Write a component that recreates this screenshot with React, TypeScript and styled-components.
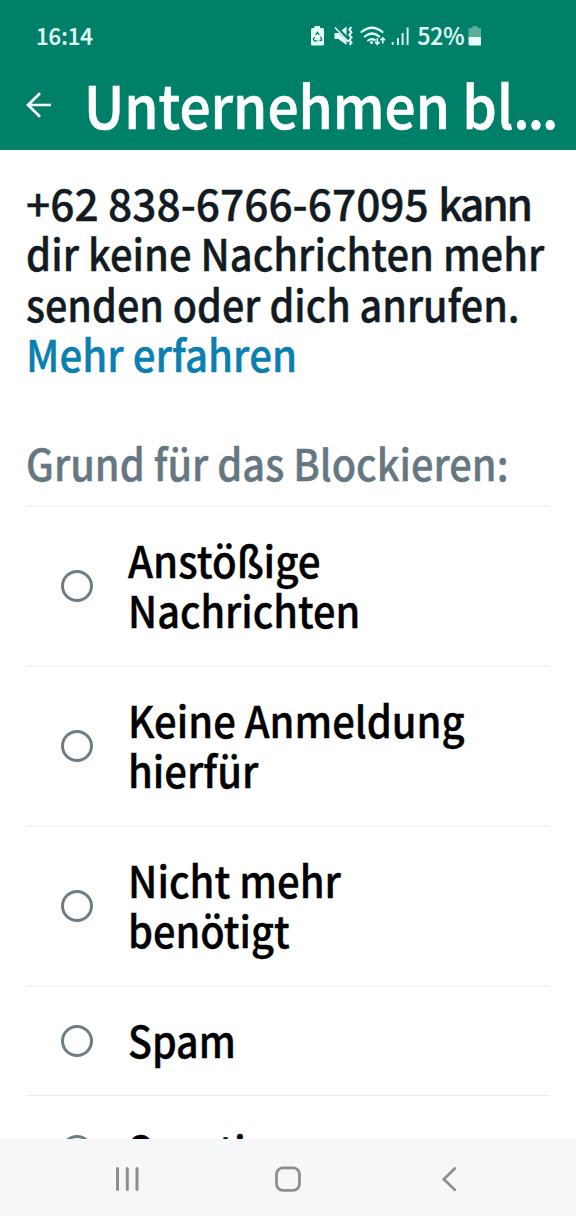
import React from "react";
import styled, { createGlobalStyle } from "styled-components";

const GlobalStyle = createGlobalStyle`
  body { margin: 0; background: #fff; }
`;

const Screen = styled.div`
  display: flex;
  flex-direction: column;
  width: 576px;
  height: 1216px;
  overflow: hidden;
  background: #fff;
  font-family: "Noto Sans CJK SC", "Noto Sans", sans-serif;
  font-weight: 500;
  -webkit-text-stroke: 0.4px currentColor;
`;

const Header = styled.header`
  flex: none;
  height: 149.5px;
  background: #018069;
  color: #fff;
`;

const StatusBar = styled.div`
  display: flex;
  align-items: center;
  height: 72px;
  padding-left: 36px;
  color: #e4fff8;
  font-size: 24px;
  line-height: 34px;
  -webkit-text-stroke: 0.2px currentColor;
`;

const StatusIcons = styled.svg`
  flex: none;
  width: 106px;
  height: 24px;
  margin-left: 214px;
`;

const BatteryIcon = styled.svg`
  flex: none;
  width: 14px;
  height: 20px;
`;

const StatusText = styled.span<{ $width: number; $scale: number }>`
  width: ${(p) => p.$width}px;
  margin-bottom: 3px;
  white-space: nowrap;
  transform: scaleX(${(p) => p.$scale});
  transform-origin: left;
`;

const AppBar = styled.div`
  display: flex;
  align-items: center;
  height: 70px;
  padding-left: 24px;
`;

const BackIcon = styled.svg`
  flex: none;
  width: 30px;
  height: 30px;
  margin-top: -4px;
`;

const Title = styled.h1`
  margin: -6px 0 0 29.5px;
  font-size: 59px;
  line-height: 70px;
  font-weight: 500;
  white-space: nowrap;
  transform: scaleX(0.932);
  transform-origin: left;
  -webkit-text-stroke: 0.7px currentColor;
`;

const Ellipsis = styled.span`
  letter-spacing: -2.2px;
`;

const Content = styled.main`
  flex: 1;
  min-height: 0;
  overflow: hidden;
  padding: 27.5px 26px 0;
  font-size: 43px;
  line-height: 50.3px;
`;

const Line = styled.span<{ $scale: number }>`
  display: block;
  width: max-content;
  white-space: nowrap;
  transform: scaleX(${(p) => p.$scale});
  transform-origin: left;
`;

const Narrow = styled.span`
  letter-spacing: -2.2px;
`;

const Notice = styled.p`
  margin: 0;
  color: #121b22;
`;

const LearnMore = styled(Line)`
  color: #0a7fb0;
`;

const SectionTitle = styled.h2`
  margin: 58.5px 0 0;
  padding-bottom: 18px;
  color: #667781;
  font-size: inherit;
  font-weight: 500;
`;

const Option = styled.div<{ $height: number; $last?: boolean }>`
  display: flex;
  align-items: center;
  box-sizing: border-box;
  height: ${(p) => p.$height}px;
  padding-left: 34.5px;
  border-top: ${(p) => (p.$last ? "1px solid #e9ebec" : "2px solid #f5f6f6")};
  color: #000;
`;

const Labels = styled.div`
  margin-bottom: 3.5px;
`;

const Radio = styled.span`
  flex: none;
  box-sizing: border-box;
  width: 32.5px;
  height: 32.5px;
  margin-right: 35px;
  border: 3px solid #6c7d86;
  border-radius: 50%;
`;

const NavBar = styled.nav`
  flex: none;
  display: flex;
  height: 77px;
  background: #f6f7f9;
`;

const NavIcon = styled.svg`
  width: 576px;
  height: 77px;
`;

type Text = [string, number];

const notice: Text[] = [
  ["dir keine Nachrichten mehr", 0.928],
  ["senden oder dich anrufen.", 0.919],
];

const options: { height: number; lines: Text[] }[] = [
  { height: 160, lines: [["Anstößige", 0.937], ["Nachrichten", 0.923]] },
  { height: 160, lines: [["Keine Anmeldung", 0.929], ["hierfür", 0.93]] },
  { height: 160, lines: [["Nicht mehr", 0.931], ["benötigt", 0.924]] },
  { height: 110, lines: [["Spam", 0.915]] },
  { height: 111, lines: [["Sonstiges", 0.915]] },
];

export default function App() {
  return (
    <Screen>
      <GlobalStyle />
      <Header>
        <StatusBar>
          <StatusText $width={60} $scale={0.92}>16:14</StatusText>
          <StatusIcons viewBox="310 24 106 24" fill="none" stroke="#e4fff8">
            <path d="M314.500 26h5.500v2h2.500q1.500 0 1.500 1.500V44q0 1.500-1.500 1.500h-10q-1.500 0-1.500-1.500V29.500q0-1.500 1.500-1.500h2z" fill="#e4fff8" stroke="none" />
            <path d="M315.700 35l1.800-2.600 1.800 2.600M320.500 36.800l1.300 3-2.300 1M317.500 40.800h-3.200l-1-1.500 1.300-2.300" stroke="#018069" strokeWidth="1.300" />
            <path d="M334.500 33h4l8-6.500v18.500l-8-6h-4z" fill="#e4fff8" stroke="none" />
            <path d="M335.500 26.500l14 15" stroke="#018069" strokeWidth="3.800" />
            <path d="M335 27.500l13.500 14.500" strokeWidth="1.600" />
            <path d="M351.500 27l-2.200 2.500 2.200 2.700-2.200 2.700 2.200 2.700-2.200 2.600 2.200 2.600-2 2" strokeWidth="2" />
            <path d="M361.500 32q10.500-8.500 21 0M364.800 36.500q7.200-6 14.400 0M368.200 40.500q3.300-2.600 6.500-.5" strokeWidth="2.200" strokeLinecap="round" />
            <circle cx="371.500" cy="42.500" r="1.500" fill="#e4fff8" stroke="none" />
            <path d="M377.300 38v6.500M375 42l2.300 2.400 2.300-2.400M382.800 43.500V38M380.500 40.200l2.300-2.400 2.300 2.400" strokeWidth="1.600" />
            <path d="M392.700 42v3M397.900 38v7M402.600 33v12M407.600 27.500v17.500" strokeWidth="1.900" />
          </StatusIcons>
          <StatusText $width={50.5} $scale={0.945}>&#8202;52%</StatusText>
          <BatteryIcon viewBox="-1.500 0 14 20">
            <path d="M4 0h5v2h2.500q1.500 0 1.500 1.500V11H0V3.500Q0 2 1.500 2H4z" fill="#5aae9c" />
            <path d="M0 11h13v7q0 1.500-1.500 1.500h-10Q0 19.500 0 18z" fill="#e4fff8" />
          </BatteryIcon>
        </StatusBar>
        <AppBar>
          <BackIcon viewBox="0 0 30 30" fill="none" stroke="#fff" strokeWidth="2.700">
            <path d="M27 15H4M16 3.200L4 15l12 11.800" />
          </BackIcon>
          <Title>Unternehmen bl<Ellipsis>...</Ellipsis></Title>
        </AppBar>
      </Header>
      <Content>
        <Notice>
          <Line $scale={0.987}>+62 838-6766-67095 <Narrow>kann</Narrow></Line>
          {notice.map(([text, scale]) => (
            <Line key={text} $scale={scale}>{text}</Line>
          ))}
          <LearnMore $scale={0.936}>Mehr erfahren</LearnMore>
        </Notice>
        <SectionTitle>
          <Line $scale={0.925}>Grund für das Blockieren:</Line>
        </SectionTitle>
        {options.map(({ height, lines }, index) => (
          <Option key={lines[0][0]} $height={height} $last={index === options.length - 1}>
            <Radio />
            <Labels>
              {lines.map(([text, scale]) => (
                <Line key={text} $scale={scale}>{text}</Line>
              ))}
            </Labels>
          </Option>
        ))}
      </Content>
      <NavBar>
        <NavIcon viewBox="0 1139 576 77" fill="none" stroke="#8e8e8f" strokeLinecap="round">
          <path d="M117.500 1168.500v21M127.300 1168.500v21M137 1168.500v21" strokeWidth="3" />
          <rect x="276.500" y="1167.800" width="23" height="22.500" rx="6.500" strokeWidth="2.800" />
          <path d="M454.800 1168.500l-11 10.700 11 10.700" strokeWidth="2.700" />
        </NavIcon>
      </NavBar>
    </Screen>
  );
}
